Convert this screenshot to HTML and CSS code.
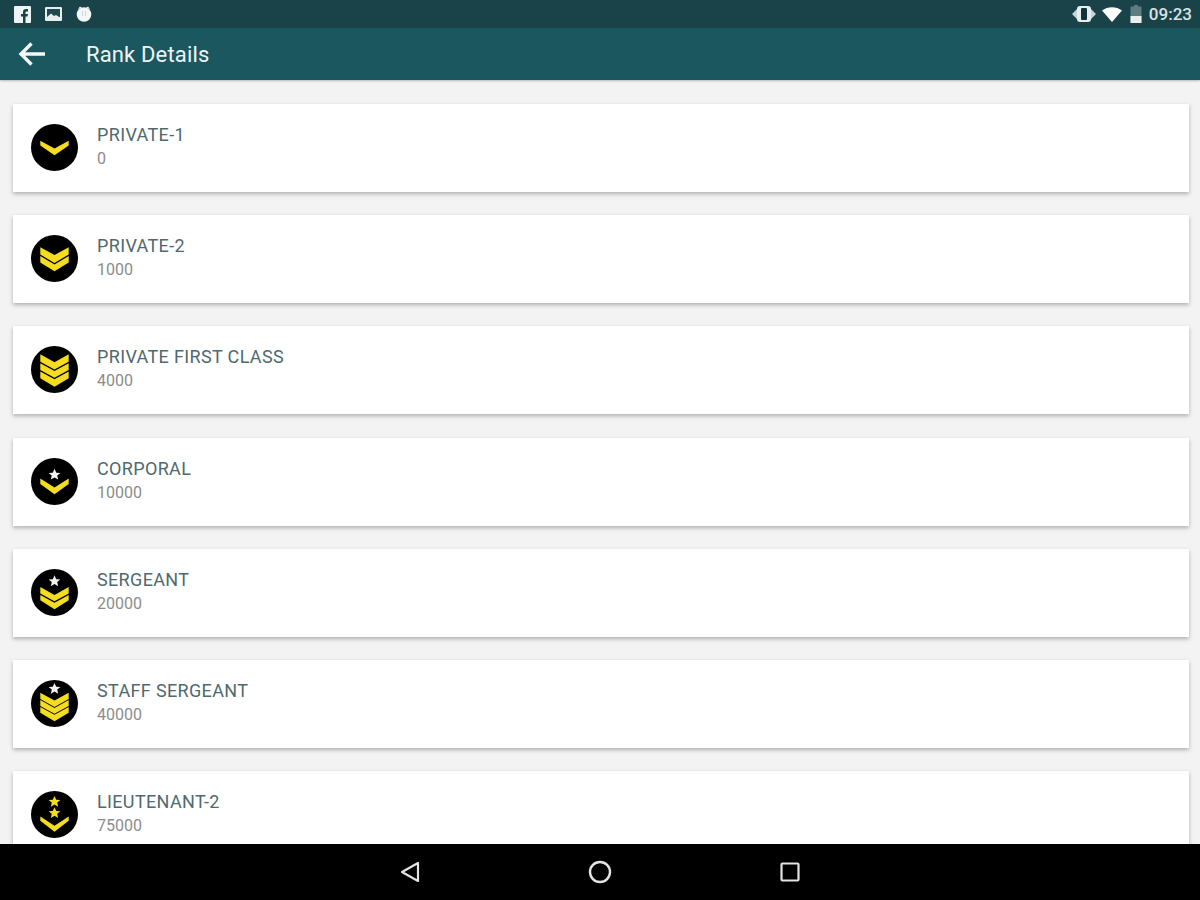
FILE: index.html
```html
<!DOCTYPE html>
<html lang="en">
<head>
  <meta charset="UTF-8" />
  <meta name="viewport" content="width=device-width, initial-scale=1.0" />
  <title>Rank Details</title>
  <link rel="stylesheet" href="styles.css">
</head>

<body>
  <svg class="defs" width="0" height="0">
    <defs>
      <path id="star" d="M0-6 1.800-2 6-1.800 2.800.8 3.700 5 0 2.800-3.700 5-2.800.8-6-1.800-1.800-2Z" />
    </defs>
  </svg>

  <header class="status-bar">
    <div class="status-left">
      <svg class="icon-fb" viewBox="0 0 17 17"><rect width="17" height="17" rx="1" fill="#eef3f3" /><path d="M11.500 17v-6.500h2l.4-2.500h-2.400V6.600c0-.8.3-1.200 1.200-1.200h1.300V3.200c-.5-.1-1.200-.2-1.900-.2-2 0-3.100 1.200-3.100 3.200V8H7v2.500h2V17Z" fill="#1a4249" /></svg>
      <svg class="icon-pic" viewBox="0 0 17 14"><rect width="17" height="14" rx="1" fill="#e6eeee" /><rect x="2" y="2" width="13" height="8" fill="#1f4a51" /><path d="M2 10 6 6.500 9 9 11 8 15 10.500V12H2Z" fill="#e6eeee" /></svg>
      <svg class="icon-alarm" viewBox="0 0 16 16"><circle cx="8" cy="8.500" r="7.300" fill="#f2f6f6" /><path d="M2 3 4 .5 6 2ZM14 3 12 .5 10 2Z" fill="#f2f6f6" /><path d="M6 5h.8v5H6ZM9.200 5h.8v5h-.8Z" fill="#c4cfd0" /></svg>
    </div>
    <div class="status-right">
      <svg class="icon-vibrate" viewBox="0 0 24 18"><path d="M0 9 6 3V15ZM24 9 18 3V15Z" fill="#c9d6d6" /><rect x="5" y="1" width="14" height="16" rx="3" fill="#e8eeee" /><rect x="9" y="3" width="6" height="12" rx="1" fill="#12333a" /></svg>
      <svg class="icon-wifi" viewBox="0 0 20 15"><path d="M0 3.500C5.500-1 14.500-1 20 3.500L10 15Z" fill="#fff" /></svg>
      <svg class="icon-battery" viewBox="0 0 12 18"><path d="M4 0H8V1.500H11.500V18H.5V1.500H4Z" fill="#5d7d80" /><path d="M.5 11H11.500V18H.5Z" fill="#e9efef" /></svg>
      <span class="clock">09:23</span>
    </div>
  </header>

  <div class="app-bar">
    <svg class="back" viewBox="0 0 28 24"><path d="M27 12H3M13.500 1.500 3 12l10.500 10.500" fill="none" stroke="#f4f8f8" stroke-width="3.400" /></svg>
    <h1>Rank Details</h1>
  </div>

  <main class="rank-list">
    <div class="card">
      <svg class="badge" viewBox="0 0 48 48"><circle cx="24" cy="24" r="24" /><path class="stripe" d="M9.500 17 24 25 38.500 17V22L24 32 9.500 22Z" /></svg>
      <div class="card-text"><div class="rank-name">PRIVATE-1</div><div class="rank-points">0</div></div>
    </div>
    <div class="card">
      <svg class="badge" viewBox="0 0 48 48"><circle cx="24" cy="24" r="24" /><path class="stripe" d="M9.500 12.500 24 20.500 38.500 12.500V20L24 28.500 9.500 20ZM9.500 21.500 24 30 38.500 21.500V28L24 37 9.500 28Z" /></svg>
      <div class="card-text"><div class="rank-name">PRIVATE-2</div><div class="rank-points">1000</div></div>
    </div>
    <div class="card">
      <svg class="badge" viewBox="0 0 48 48"><circle cx="24" cy="24" r="24" /><path class="stripe" d="M9.500 8.500 24 16.500 38.500 8.500V16L24 24 9.500 16ZM9.500 17.500 24 25.500 38.500 17.500V24.500L24 32.500 9.500 24.500ZM9.500 26 24 34 38.500 26V33L24 41.500 9.500 33Z" /></svg>
      <div class="card-text"><div class="rank-name">PRIVATE FIRST CLASS</div><div class="rank-points">4000</div></div>
    </div>
    <div class="card">
      <svg class="badge" viewBox="0 0 48 48"><circle cx="24" cy="24" r="24" /><use href="#star" class="star-white" x="24" y="17" /><path class="stripe" d="M9.500 21 24 30 38.500 21V26.500L24 37 9.500 26.500Z" /></svg>
      <div class="card-text"><div class="rank-name">CORPORAL</div><div class="rank-points">10000</div></div>
    </div>
    <div class="card">
      <svg class="badge" viewBox="0 0 48 48"><circle cx="24" cy="24" r="24" /><use href="#star" class="star-white" x="24" y="12.500" /><path class="stripe" d="M9.500 18.500 24 26.500 38.500 18.500V25L24 33 9.500 25ZM9.500 26.500 24 34.500 38.500 26.500V32L24 41 9.500 32Z" /></svg>
      <div class="card-text"><div class="rank-name">SERGEANT</div><div class="rank-points">20000</div></div>
    </div>
    <div class="card">
      <svg class="badge" viewBox="0 0 48 48"><circle cx="24" cy="24" r="24" /><use href="#star" class="star-white" x="24" y="9" /><path class="stripe" d="M9.500 13 24 21 38.500 13V19.500L24 27.500 9.500 19.500ZM9.500 20.500 24 28.500 38.500 20.500V26.500L24 34.500 9.500 26.500ZM9.500 27.500 24 35.500 38.500 27.500V33.500L24 42 9.500 33.500Z" /></svg>
      <div class="card-text"><div class="rank-name">STAFF SERGEANT</div><div class="rank-points">40000</div></div>
    </div>
    <div class="card">
      <svg class="badge" viewBox="0 0 48 48"><circle cx="24" cy="24" r="24" /><use href="#star" class="star-gold" x="24" y="11" /><use href="#star" class="star-gold" x="24" y="22.500" /><path class="stripe" d="M9.500 26 24 35.500 38.500 26V30.500L24 41.500 9.500 30.500Z" /></svg>
      <div class="card-text"><div class="rank-name">LIEUTENANT-2</div><div class="rank-points">75000</div></div>
    </div>
  </main>

  <footer class="nav-bar">
    <svg class="nav-back" viewBox="0 0 20 22"><path d="M18 2V20L2 11Z" fill="none" stroke="#e4e4e4" stroke-width="2.200" stroke-linejoin="round" /></svg>
    <svg class="nav-home" viewBox="0 0 24 24"><circle cx="12" cy="12" r="10" fill="none" stroke="#e4e4e4" stroke-width="2.400" /></svg>
    <svg class="nav-recent" viewBox="0 0 20 20"><rect x="1.500" y="1.500" width="17" height="17" rx="1" fill="none" stroke="#e4e4e4" stroke-width="2.200" /></svg>
  </footer>
</body>
</html>
```

FILE: styles.css
```css
html, body {
  height: 100%;
}
body {
  margin: 0;
  height: 900px;
  overflow: hidden;
  display: flex;
  flex-direction: column;
  font-family: Roboto, "Liberation Sans", sans-serif;
  background-color: #f3f3f3;
}
.defs {
  position: absolute;
}
.status-bar {
  flex: 0 0 28px;
  display: flex;
  justify-content: space-between;
  align-items: center;
  padding: 0 8px 0 14px;
  background-color: #1a4249;
}
.status-left, .status-right {
  display: flex;
  align-items: center;
}
.status-left {
  gap: 14px;
}
.icon-fb {
  width: 17px;
  height: 17px;
}
.icon-pic {
  width: 17px;
  height: 14px;
}
.icon-alarm {
  width: 16px;
  height: 16px;
}
.icon-vibrate {
  width: 24px;
  height: 18px;
}
.icon-wifi {
  width: 20px;
  height: 15px;
  margin-left: 6px;
}
.icon-battery {
  width: 12px;
  height: 18px;
  margin-left: 8px;
}
.clock {
  margin-left: 7px;
  font-size: 17px;
  font-weight: 500;
  color: #d9e2e3;
}
.app-bar {
  flex: 0 0 52px;
  display: flex;
  align-items: center;
  padding-left: 18px;
  background-color: #1b575f;
  box-shadow: 0 1px 2px rgba(0,0,0,0.25);
  position: relative;
}
.back {
  width: 28px;
  height: 24px;
}
.app-bar h1 {
  margin: 0 0 0 40px;
  font-size: 22px;
  font-weight: 400;
  letter-spacing: 0.15px;
  color: #eef4f4;
}
.rank-list {
  flex: 1;
  min-height: 0;
  overflow: hidden;
  display: flex;
  flex-direction: column;
  gap: 23.200px;
  padding: 24px 11px 0 13px;
}
.card {
  flex: 0 0 88px;
  display: flex;
  align-items: center;
  gap: 19px;
  padding-left: 18px;
  background-color: #fff;
  box-shadow: 0 2px 4px rgba(0,0,0,0.28);
}
.badge {
  width: 47px;
  height: 47px;
  flex: none;
  margin-bottom: 1px;
}
.stripe, .star-gold {
  fill: #f4dc1e;
}
.star-white {
  fill: #f2f2f2;
}
.card-text {
  display: flex;
  flex-direction: column;
  gap: 5px;
  margin-bottom: 3px;
}
.rank-name {
  font-size: 18px;
  line-height: 20px;
  letter-spacing: 0.35px;
  color: #4f6a6e;
}
.rank-points {
  font-size: 16px;
  line-height: 18px;
  color: #8c8c8c;
}
.nav-bar {
  flex: 0 0 56px;
  position: relative;
  display: flex;
  justify-content: center;
  align-items: center;
  gap: 168px;
  background-color: #000;
}
.nav-back {
  width: 20px;
  height: 22px;
}
.nav-home {
  width: 24px;
  height: 24px;
}
.nav-recent {
  width: 20px;
  height: 20px;
}
```
